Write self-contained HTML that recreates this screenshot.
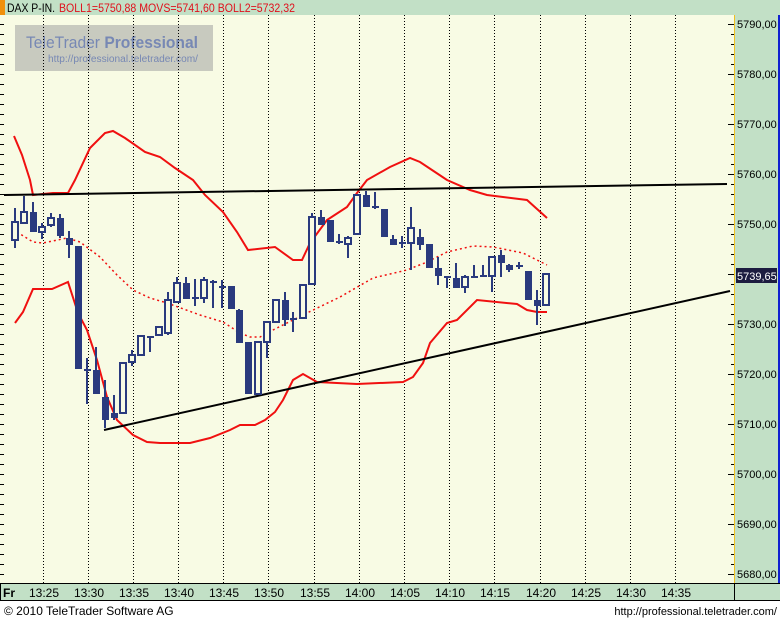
<!DOCTYPE html>
<html><head><meta charset="utf-8"><style>
body{margin:0;width:780px;height:620px;overflow:hidden;background:#fff;font-family:"Liberation Sans",sans-serif;}
</style></head><body>
<svg width="780" height="620" xmlns="http://www.w3.org/2000/svg" style="display:block">
<rect x="0" y="0" width="780" height="600" fill="#f8fbe4"/>
<rect x="0" y="0" width="780" height="15" fill="#c2e0c6"/>
<rect x="0" y="0" width="5" height="15" fill="#f0900c"/>
<text x="7" y="12" font-size="12" fill="#000" textLength="48" lengthAdjust="spacingAndGlyphs">DAX P-IN.</text>
<text x="59" y="12" font-size="12" fill="#e0101c" textLength="236" lengthAdjust="spacingAndGlyphs">BOLL1=5750,88 MOVS=5741,60 BOLL2=5732,32</text>
<rect x="734" y="15" width="46" height="568" fill="#c2e0c6"/>
<line x1="734.5" y1="15" x2="734.5" y2="583" stroke="#f0c020" stroke-width="1"/>
<rect x="778" y="15" width="2" height="568" fill="#1020d0"/>
<rect x="0" y="583" width="780" height="18" fill="#c2e0c6"/>
<line x1="0" y1="583.5" x2="780" y2="583.5" stroke="#000"/>
<line x1="0" y1="600.5" x2="780" y2="600.5" stroke="#000"/>
<line x1="734.5" y1="583" x2="734.5" y2="600" stroke="#000"/>
<line x1="0.5" y1="583" x2="0.5" y2="600" stroke="#000"/>
<g font-size="12" fill="#000">
<text x="3" y="597" font-weight="bold">Fr</text>
<text x="29" y="597">13:25</text><text x="74" y="597">13:30</text><text x="119" y="597">13:35</text><text x="164" y="597">13:40</text><text x="209" y="597">13:45</text><text x="254" y="597">13:50</text><text x="300" y="597">13:55</text><text x="345" y="597">14:00</text><text x="390" y="597">14:05</text><text x="435" y="597">14:10</text><text x="480" y="597">14:15</text><text x="526" y="597">14:20</text><text x="571" y="597">14:25</text><text x="616" y="597">14:30</text><text x="661" y="597">14:35</text>
</g>
<rect x="15" y="25" width="198" height="46" fill="#c8cabf"/>
<text x="26" y="48" font-size="17" fill="#7788b4" textLength="172" lengthAdjust="spacingAndGlyphs">TeleTrader <tspan font-weight="bold">Professional</tspan></text>
<text x="48" y="62" font-size="10" fill="#7788b4" textLength="150" lengthAdjust="spacingAndGlyphs">http://professional.teletrader.com/</text>
<g stroke="#000" stroke-width="1" stroke-dasharray="1,2">
<line x1="43.5" y1="15" x2="43.5" y2="583"/><line x1="88.5" y1="15" x2="88.5" y2="583"/><line x1="133.5" y1="15" x2="133.5" y2="583"/><line x1="178.5" y1="15" x2="178.5" y2="583"/><line x1="223.5" y1="15" x2="223.5" y2="583"/><line x1="268.5" y1="15" x2="268.5" y2="583"/><line x1="314.5" y1="15" x2="314.5" y2="583"/><line x1="359.5" y1="15" x2="359.5" y2="583"/><line x1="404.5" y1="15" x2="404.5" y2="583"/><line x1="449.5" y1="15" x2="449.5" y2="583"/><line x1="494.5" y1="15" x2="494.5" y2="583"/><line x1="540.5" y1="15" x2="540.5" y2="583"/><line x1="585.5" y1="15" x2="585.5" y2="583"/><line x1="630.5" y1="15" x2="630.5" y2="583"/><line x1="675.5" y1="15" x2="675.5" y2="583"/>
</g>
<g stroke="#000" stroke-width="1">
<path d="M0 24.5h4M0 34.5h4M0 44.5h4M0 54.5h4M0 64.5h4M0 74.5h4M0 84.5h4M0 94.5h4M0 104.5h4M0 114.5h4M0 124.5h4M0 134.5h4M0 144.5h4M0 154.5h4M0 164.5h4M0 174.5h4M0 184.5h4M0 194.5h4M0 204.5h4M0 214.5h4M0 224.5h4M0 234.5h4M0 244.5h4M0 254.5h4M0 264.5h4M0 274.5h4M0 284.5h4M0 294.5h4M0 304.5h4M0 314.5h4M0 324.5h4M0 334.5h4M0 344.5h4M0 354.5h4M0 364.5h4M0 374.5h4M0 384.5h4M0 394.5h4M0 404.5h4M0 414.5h4M0 424.5h4M0 434.5h4M0 444.5h4M0 454.5h4M0 464.5h4M0 474.5h4M0 484.5h4M0 494.5h4M0 504.5h4M0 514.5h4M0 524.5h4M0 534.5h4M0 544.5h4M0 554.5h4M0 564.5h4M0 574.5h4"/>
<path d="M731 34.5h3M731 44.5h3M731 54.5h3M731 64.5h3M731 84.5h3M731 94.5h3M731 104.5h3M731 114.5h3M731 134.5h3M731 144.5h3M731 154.5h3M731 164.5h3M731 184.5h3M731 194.5h3M731 204.5h3M731 214.5h3M731 234.5h3M731 244.5h3M731 254.5h3M731 264.5h3M731 284.5h3M731 294.5h3M731 304.5h3M731 314.5h3M731 334.5h3M731 344.5h3M731 354.5h3M731 364.5h3M731 384.5h3M731 394.5h3M731 404.5h3M731 414.5h3M731 434.5h3M731 444.5h3M731 454.5h3M731 464.5h3M731 484.5h3M731 494.5h3M731 504.5h3M731 514.5h3M731 534.5h3M731 544.5h3M731 554.5h3M731 564.5h3"/>
<path d="M728 24.5h6M728 74.5h6M728 124.5h6M728 174.5h6M728 224.5h6M728 274.5h6M728 324.5h6M728 374.5h6M728 424.5h6M728 474.5h6M728 524.5h6M728 574.5h6"/>
</g>
<g font-size="11" fill="#000">
<text x="737" y="28">5790,00</text><text x="737" y="78">5780,00</text><text x="737" y="128">5770,00</text><text x="737" y="178">5760,00</text><text x="737" y="228">5750,00</text><text x="737" y="328">5730,00</text><text x="737" y="378">5720,00</text><text x="737" y="428">5710,00</text><text x="737" y="478">5700,00</text><text x="737" y="528">5690,00</text><text x="737" y="578">5680,00</text>
</g>
<rect x="736" y="268" width="41" height="15" fill="#1c1c40"/>
<text x="737" y="280" font-size="11" fill="#fff">5739,65</text>
<g fill="none" stroke="#f01010" stroke-width="2">
<polyline points="14,136 22,155 30,180 33,195 53,193 68,193 75,180 90,148 105,133 113,131 125,138 145,152 160,157 175,168 193,180 205,195 223,212 237,232 248,250 275,247 293,260 302,260 310,243 327,220 347,207 357,193 367,180 390,167 410,158 420,162 435,172 447,180 470,190 487,195 527,200 547,218"/>
<polyline points="15,323 23,312 33,289 52,289 68,282 78,313 87,330 97,360 107,397 117,420 133,435 147,442 160,443 190,443 210,438 230,430 240,425 255,425 265,420 275,412 283,400 293,380 303,374 317,382 357,384 403,382 413,377 423,363 430,343 447,323 457,320 477,300 517,304 527,310 537,312 547,312"/>
</g>
<polyline fill="none" stroke="#f01010" stroke-width="1.5" stroke-dasharray="2,3" points="17,232 33,242 43,243 67,238 80,242 100,257 117,275 133,290 150,298 167,303 200,315 223,322 240,333 250,337 260,337 273,330 307,313 340,297 373,278 407,270 427,262 447,252 473,246 493,247 523,253 547,265"/>
<g stroke="#000" stroke-width="2" fill="none">
<line x1="4" y1="195" x2="727" y2="184"/>
<line x1="104" y1="430" x2="730" y2="291"/>
</g>
<g stroke="#2a3a7e" stroke-width="2" fill="#2a3a7e">
<path fill="none" d="M15 208V248M24 196V223M33 202V232M42 223V239M51 213V227M60 214V238M69 231V258M87 358V404M96 347V394M105 380V428M114 395V420M132 350V366M150 337V352M168 292V335M177 277V302M186 277V299M195 279V306M204 277V303M213 280V308M222 280V308M231 286V309M239 309V343M267 322V358M285 292V326M293 312V332M312 213V284M321 210V224M339 234V244M348 236V258M366 191V207M375 192V209M393 235V245M402 236V248M411 207V270M420 229V250M438 257V285M447 276V288M456 263V288M465 275V293M474 265V277M483 265V276M492 257V292M501 250V277M509 264V272M519 262V269M537 290V325"/>
<g fill="#f8fbe4">
<rect x="12" y="222" width="6" height="18"/><rect x="21" y="212" width="6" height="11"/><rect x="39" y="227" width="6" height="5"/><rect x="48" y="218" width="6" height="7"/><rect x="120" y="363" width="6" height="50"/><rect x="129" y="355" width="6" height="7"/><rect x="138" y="336" width="6" height="19"/><rect x="156" y="327" width="6" height="8"/><rect x="165" y="300" width="6" height="33"/><rect x="174" y="283" width="6" height="19"/><rect x="201" y="280" width="6" height="18"/><rect x="255" y="342" width="6" height="52"/><rect x="264" y="322" width="6" height="20"/><rect x="273" y="300" width="6" height="22"/><rect x="300" y="285" width="6" height="33"/><rect x="309" y="217" width="6" height="67"/><rect x="345" y="238" width="6" height="6"/><rect x="354" y="195" width="6" height="39"/><rect x="408" y="228" width="6" height="15"/><rect x="462" y="277" width="6" height="10"/><rect x="489" y="257" width="6" height="19"/><rect x="543" y="274" width="6" height="31"/>
</g>
<g stroke="none">
<rect x="30" y="212" width="7" height="20"/><rect x="57" y="218" width="7" height="18"/><rect x="66" y="238" width="7" height="7"/><rect x="75" y="246" width="7" height="123"/><rect x="84" y="369" width="7" height="2"/><rect x="93" y="370" width="7" height="24"/><rect x="102" y="397" width="7" height="23"/><rect x="111" y="413" width="7" height="5"/><rect x="147" y="336" width="7" height="2"/><rect x="183" y="283" width="7" height="16"/><rect x="192" y="297" width="7" height="2"/><rect x="210" y="281" width="7" height="2"/><rect x="219" y="286" width="7" height="2"/><rect x="228" y="286" width="7" height="23"/><rect x="236" y="310" width="7" height="33"/><rect x="245" y="342" width="7" height="52"/><rect x="282" y="300" width="7" height="20"/><rect x="290" y="318" width="7" height="2"/><rect x="318" y="217" width="7" height="8"/><rect x="327" y="220" width="7" height="22"/><rect x="336" y="241" width="7" height="2"/><rect x="363" y="195" width="7" height="12"/><rect x="372" y="206" width="7" height="2"/><rect x="381" y="209" width="7" height="28"/><rect x="390" y="239" width="7" height="6"/><rect x="399" y="242" width="7" height="2"/><rect x="417" y="237" width="7" height="8"/><rect x="426" y="244" width="7" height="24"/><rect x="435" y="268" width="7" height="8"/><rect x="444" y="276" width="7" height="2"/><rect x="453" y="278" width="7" height="10"/><rect x="471" y="276" width="7" height="2"/><rect x="480" y="275" width="7" height="2"/><rect x="498" y="255" width="7" height="8"/><rect x="506" y="265" width="7" height="5"/><rect x="516" y="265" width="7" height="2"/><rect x="525" y="271" width="7" height="29"/><rect x="534" y="300" width="7" height="6"/>
</g>
</g>
<text x="4" y="615" font-size="12" fill="#000">© 2010 TeleTrader Software AG</text>
<text x="777" y="615" font-size="11" fill="#000" text-anchor="end">http://professional.teletrader.com/</text>
</svg>
</body></html>
